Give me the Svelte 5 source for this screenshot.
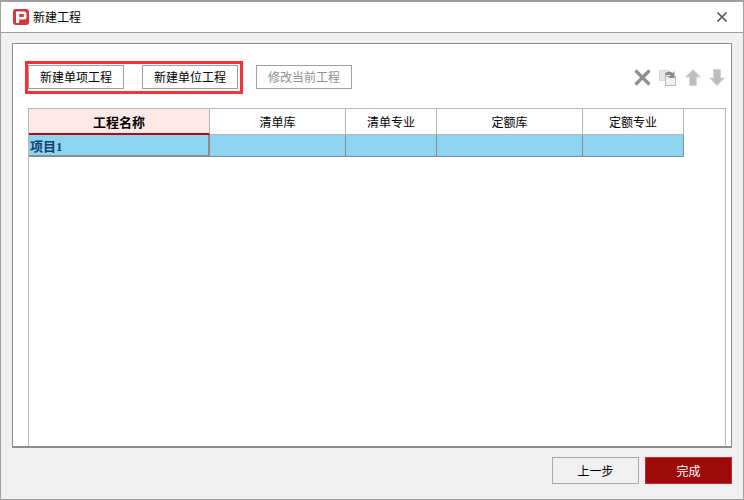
<script>
  const columns = [
    { name: '工程名称', width: 181, active: true },
    { name: '清单库', width: 136 },
    { name: '清单专业', width: 91 },
    { name: '定额库', width: 146 },
    { name: '定额专业', width: 101 }
  ];
</script>

<div class="window">
  <header class="titlebar">
    <svg class="logo" width="16" height="16" viewBox="0 0 16 16">
      <rect width="16" height="16" rx="3" fill="#d0383c" />
      <path d="M3 2.500h8a2.500 2.500 0 0 1 2.500 2.500v3a2.500 2.500 0 0 1-2.500 2.500H6.200V14H3z" fill="#fff" />
      <rect x="6.200" y="5" width="4.600" height="3" fill="#d0383c" />
    </svg>
    <span class="title">新建工程</span>
    <svg class="close" width="12" height="12" viewBox="0 0 12 12">
      <path d="M1.500 1.500l9 9M10.500 1.500l-9 9" stroke="#555" stroke-width="1.700" fill="none" />
    </svg>
  </header>

  <main class="body">
    <section class="panel">
      <div class="toolbar">
        <div class="highlight">
          <button>新建单项工程</button>
          <button>新建单位工程</button>
        </div>
        <button class="disabled">修改当前工程</button>
        <div class="icons">
          <svg width="17" height="17" viewBox="0 0 17 17">
            <path d="M1.500 1.500l14 14M15.500 1.500l-14 14" stroke="#8f8f8f" stroke-width="3.200" fill="none" />
          </svg>
          <svg width="17" height="16" viewBox="0 0 17 16">
            <rect x="0.500" y="0.500" width="9" height="10" fill="#e6e6e6" stroke="#d8d8d8" />
            <rect x="6.500" y="6.500" width="10" height="9" fill="#f0f0f0" stroke="#b8b8b8" />
            <path d="M6 3.500q4-3.500 7.500-0.500L15.500 1v7H9l2.500-2.500q-2-1.500-5.500 0z" fill="#8c8c8c" />
          </svg>
          <svg width="16" height="17" viewBox="0 0 16 17">
            <path d="M8 0.500L15.500 8H11.500v8.500h-7V8H0.500z" fill="#bdbdbd" stroke="#d6d6d6" />
          </svg>
          <svg width="16" height="17" viewBox="0 0 16 17">
            <path d="M8 16.500L15.500 9H11.500V0.500h-7V9H0.500z" fill="#bdbdbd" stroke="#d6d6d6" />
          </svg>
        </div>
      </div>

      <div class="grid">
        <div class="row head">
          {#each columns as c}
            <div class="cell" class:active={c.active} style="width: {c.width}px">{c.name}</div>
          {/each}
        </div>
        <div class="row data">
          {#each columns as c, i}
            <div class="cell" class:first={i === 0} style="width: {c.width}px">{i === 0 ? '项目1' : ''}</div>
          {/each}
        </div>
      </div>
    </section>

    <footer class="actions">
      <button class="back">上一步</button>
      <button class="done">完成</button>
    </footer>
  </main>
</div>

<style>
  :global(body) {
    margin: 0;
    background: #f0f0f0;
  }
  .window {
    width: 744px;
    height: 500px;
    box-sizing: border-box;
    border: 1px solid #a0a0a0;
    border-top-width: 2px;
    display: flex;
    flex-direction: column;
    font: 12px "Noto Sans CJK SC", sans-serif;
    color: #000;
    background: #f0f0f0;
    overflow: hidden;
  }
  .titlebar {
    height: 29px;
    flex: none;
    background: #fff;
    border-bottom: 1px solid #a0a0a0;
    display: flex;
    align-items: center;
    padding: 0 15px 1px 12px;
    box-sizing: content-box;
  }
  .logo {
    margin-right: 4px;
  }
  .title {
    flex: 1;
    line-height: 1;
  }
  .body {
    flex: 1;
    min-height: 0;
    padding: 10px 11px 0;
    display: flex;
    flex-direction: column;
  }
  .panel {
    height: 405px;
    flex: none;
    box-sizing: border-box;
    background: #fff;
    border: 1px solid #8c8c8c;
    border-bottom-width: 2px;
    display: flex;
    flex-direction: column;
    padding: 18px 5px 0 15px;
  }
  .toolbar {
    height: 46px;
    flex: none;
    display: flex;
    align-items: flex-start;
  }
  button {
    font: inherit;
    color: #000;
    background: #fff;
    border: 1px solid #a0a0a0;
    border-radius: 0;
    padding: 0;
    margin: 0;
    height: 24px;
    line-height: 1;
  }
  .toolbar button {
    width: 96px;
  }
  .highlight {
    box-sizing: border-box;
    margin: -1px 0 0 -3px;
    width: 218px;
    height: 33px;
    border: 3px solid #ff2f38;
    display: flex;
    gap: 18px;
    align-items: flex-start;
  }
  .highlight button {
    margin-top: 1px;
  }
  .toolbar .disabled {
    margin: 3px 0 0 13px;
    color: #8f8f8f;
  }
  .icons {
    margin-left: auto;
    margin-right: 1px;
    margin-top: 7px;
    display: flex;
    align-items: center;
    gap: 8px;
  }
  .icons svg:nth-child(2) {
    margin-right: 1px;
  }
  .grid {
    flex: 1;
    min-height: 0;
    border: 1px solid #b8b8b8;
    border-width: 1px 1px 0 1px;
  }
  .row {
    display: flex;
  }
  .cell {
    box-sizing: border-box;
    flex: none;
    display: flex;
    align-items: center;
    justify-content: center;
    border-right: 1px solid #b4b4b4;
  }
  .head .cell {
    height: 26px;
    border-bottom: 1px solid #b4b4b4;
    background: #fff;
  }
  .head .cell.active {
    background: #ffe8e8;
    font-weight: 700;
    font-size: 13px;
    border-bottom: 2px solid #b00d0d;
    border-right-color: #b4b4b4;
  }
  .data .cell {
    height: 22px;
    background: #8dd5f0;
    border-right: 1px solid #8c8c8c;
    border-bottom: 1px solid #8c8c8c;
  }
  .data .cell.first {
    justify-content: flex-start;
    padding-left: 1px;
    color: #123f6d;
    font-weight: 700;
    font-size: 13px;
    font-family: "Liberation Serif", "Noto Sans CJK SC", serif;
    border-right-width: 2px;
    border-bottom-width: 2px;
  }
  .actions {
    flex: 1;
    display: flex;
    justify-content: flex-end;
    align-items: flex-start;
    gap: 6px;
    padding-top: 9px;
  }
  .back,
  .done {
    width: 87px;
    height: 27px;
  }
  .back {
    background: #f0f0f0;
    border-color: #a8a8a8;
  }
  .done {
    background: #9c0a0a;
    border-color: #b92a30;
    color: #fff;
  }
</style>
